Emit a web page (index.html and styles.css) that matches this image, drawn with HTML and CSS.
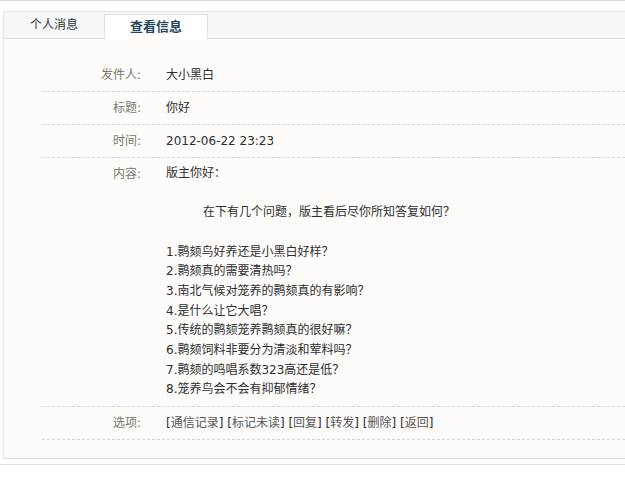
FILE: index.html
```html
<!DOCTYPE html>
<html lang="zh-CN">
<head>
  <meta charset="UTF-8">
  <title>查看信息</title>
  <link rel="stylesheet" href="styles.css">
</head>
<body>
  <div class="topline"></div>
  <div class="box">
    <ul class="tabs">
      <li class="tab">个人消息</li>
      <li class="tab active">查看信息</li>
    </ul>
    <div class="detail">
      <div class="row"><span class="label">发件人:</span><span class="value">大小黑白</span></div>
      <div class="row"><span class="label">标题:</span><span class="value">你好</span></div>
      <div class="row"><span class="label">时间:</span><span class="value">2012-06-22 23:23</span></div>
      <div class="row"><span class="label">内容:</span>
        <div class="value msg">
          版主你好：<br><br>
          <span class="indent">在下有几个问题，版主看后尽你所知答复如何？</span><br><br>
          1.鹮颏鸟好养还是小黑白好样？<br>
          2.鹮颏真的需要清热吗？<br>
          3.南北气候对笼养的鹮颏真的有影响？<br>
          4.是什么让它大唱？<br>
          5.传统的鹮颏笼养鹮颏真的很好嘛？<br>
          6.鹮颏饲料非要分为清淡和荤料吗？<br>
          7.鹮颏的鸣唱系数323高还是低？<br>
          8.笼养鸟会不会有抑郁情绪？
        </div>
      </div>
      <div class="row"><span class="label">选项:</span>
        <span class="value opts">[<a href="#">通信记录</a>] [<a href="#">标记未读</a>] [<a href="#">回复</a>] [<a href="#">转发</a>] [<a href="#">删除</a>] [<a href="#">返回</a>]</span>
      </div>
    </div>
  </div>
  <div class="footline"></div>
</body>
</html>
```
FILE: styles.css
```css
body { margin:0; background:#fff; font-family:"DejaVu Sans","Noto Sans CJK SC",sans-serif; font-size:12px; color:#333; }
.topline { height:1px; background:#dcdcdc; }
.box { margin:10px 0 0 3px; border:1px solid #e2e5e7; border-right:none; border-bottom-color:#dedede; background:#fdfcfb; }
.tabs { list-style:none; margin:0; padding:0; height:26px; display:flex; align-items:flex-end; background:#f5f7f8; border-bottom:1px solid #dde1e3; }
.tab { width:100px; height:26px; line-height:27px; text-align:center; color:#333; }
.tab.active { width:102px; height:23px; line-height:24px; margin-bottom:-1px; padding-bottom:1px; background:#fff; border:1px solid #dde1e3; border-bottom:none; color:#25475c; font-weight:bold; font-size:13px; }
.detail { padding:20px 0 18px 38px; }
.row { display:flex; padding:6px 0; line-height:20px; border-bottom:1px dashed #d6d6d6; }
.label { width:99px; flex:none; text-align:right; padding-right:25px; color:#78786a; }
.value { flex:1; color:#2e2e2e; }
.msg { line-height:19.65px; }
.indent { padding-left:37px; }
.opts a { color:#555; text-decoration:none; }
.footline { margin-top:5px; border-top:1px solid #e0e0e0; }
```
